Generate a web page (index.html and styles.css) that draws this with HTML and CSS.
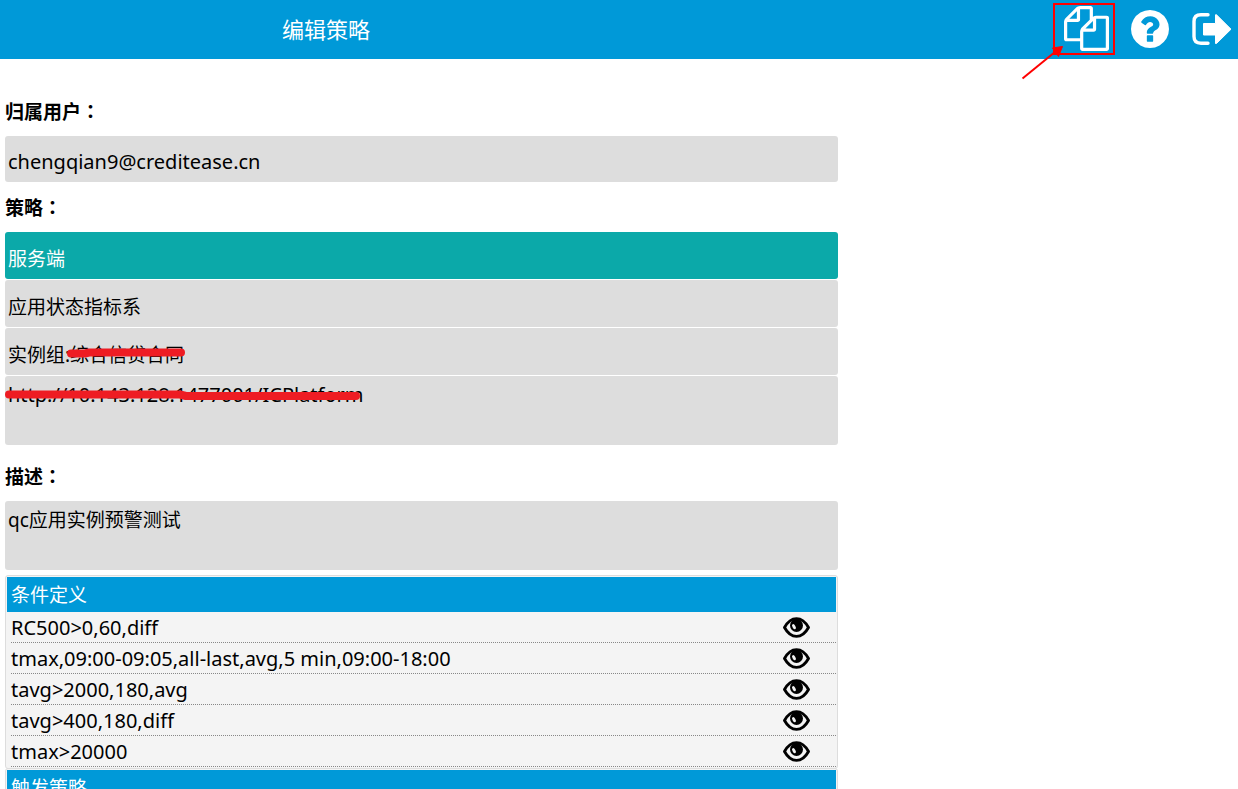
FILE: index.html
```html
<!DOCTYPE html>
<html lang="zh-CN">
<head>
<meta charset="utf-8">
<meta name="viewport" content="width=device-width, initial-scale=1">
<title>编辑策略</title>
<link rel="stylesheet" href="styles.css">
</head>
<body>
<svg class="sprite" aria-hidden="true">
  <symbol id="eye" viewBox="0 0 27 21">
    <path d="M1.500 10.500C4.500 5 8.500 1.600 13.500 1.600S22.500 5 25.500 10.500C22.500 16 18.500 19.400 13.500 19.400S4.500 16 1.500 10.500Z" fill="none" stroke="#000" stroke-width="2.900" stroke-linejoin="round"/>
    <circle cx="13.500" cy="8.500" r="6.500"/>
    <ellipse cx="11" cy="9.700" rx="1.500" ry="2.800" transform="rotate(-30 11 9.700)" fill="#f4f4f4"/>
  </symbol>
</svg>
<header class="topbar">
  <h1 class="title">编辑策略</h1>
  <nav class="actions">
    <button class="action copy" type="button" aria-label="复制">
      <svg class="copy-icon" viewBox="0 0 1792 1792"><path fill="currentColor" d="M1696 384q40 0 68 28t28 68v1216q0 40-28 68t-68 28h-960q-40 0-68-28t-28-68v-288h-544q-40 0-68-28t-28-68v-672q0-40 20-88t48-76l408-408q28-28 76-48t88-20h416q40 0 68 28t28 68v328q68-40 128-40h416zm-544 213l-299 299h299v-299zm-640-384l-299 299h299v-299zm196 647l316-316v-416h-384v416q0 40-28 68t-68 28h-416v640h512v-256q0-40 20-88t48-76zm956 804v-1152h-384v416q0 40-28 68t-68 28h-416v640h896z"/></svg>
      <svg class="marker" viewBox="0 0 96 80" aria-hidden="true">
        <rect x="33" y="4" width="60" height="50" fill="none" stroke="#f00" stroke-width="2"/>
        <path d="M1.500 78.500L34 52" stroke="#f00" stroke-width="2" fill="none"/>
        <path d="M41.500 46.500L31.500 48L37.500 56.500Z" fill="#f00" stroke="#f00"/>
      </svg>
    </button>
    <button class="action" type="button" aria-label="帮助">
      <svg class="help-icon" viewBox="128 128 1536 1536"><path fill="currentColor" d="M1024 1376v-192q0-14-9-23t-23-9h-192q-14 0-23 9t-9 23v192q0 14 9 23t23 9h192q14 0 23-9t9-23zm256-672q0-88-55.500-163t-138.500-116-170-41q-243 0-371 213-15 24 8 42l132 100q7 6 19 6 16 0 25-12 53-68 86-92 34-24 86-24 48 0 85.500 26t37.500 59q0 38-20 61t-68 45q-63 28-115.500 86.500t-52.500 125.500v36q0 14 9 23t23 9h192q14 0 23-9t9-23q0-19 21.500-49.500t54.500-49.500q32-18 49-28.500t46-35 44.500-48 28-60.500 12.500-81zm384 192q0 209-103 385.500t-279.500 279.500-385.500 103-385.500-103-279.500-279.500-103-385.500 103-385.500 279.500-279.500 385.500-103 385.500 103 279.500 279.500 103 385.500z"/></svg>
    </button>
    <button class="action" type="button" aria-label="退出">
      <svg class="exit-icon" viewBox="-1 0 41 32"><path d="M16 1.800H9Q2 1.800 2 8.500V23.500Q2 30.200 9 30.200H16" fill="none" stroke="currentColor" stroke-width="3.400" stroke-linecap="round"/><path fill="currentColor" stroke="currentColor" stroke-linejoin="round" d="M11.500 10.500H23.500V1.800H24.500L39 16.200L24.500 30.500H23.500V22H11.500Z"/></svg>
    </button>
  </nav>
</header>
<main class="page">
  <form class="form">
    <label class="label" for="owner">归属用户<span class="colon" lang="zh-TW">：</span></label>
    <input class="field field-owner latin" id="owner" type="text" value="chengqian9@creditease.cn">
    <label class="label" for="side">策略<span class="colon" lang="zh-TW">：</span></label>
    <div class="stack">
      <input class="field field-head" id="side" type="text" value="服务端">
      <input class="field" type="text" aria-label="指标" value="应用状态指标系">
      <div class="masked">
        <input class="field" type="text" aria-label="实例组" value="实例组:综合信贷合同">
        <svg class="stroke" viewBox="0 0 360 47" aria-hidden="true"><path d="M66 25.500H80L84 24.500H176" /></svg>
      </div>
      <div class="masked">
        <textarea class="field area latin" aria-label="实例地址">http://10.143.128.1477001/ICPlatform</textarea>
        <svg class="stroke" viewBox="0 0 360 47" aria-hidden="true"><path d="M4 18.500H175L181 20H351" /></svg>
      </div>
    </div>
    <label class="label label-desc" for="desc">描述<span class="colon" lang="zh-TW">：</span></label>
    <textarea class="field area" id="desc">qc应用实例预警测试</textarea>
  </form>
  <section class="panel">
    <h2 class="panel-title">条件定义</h2>
    <ul class="rows latin">
      <li class="row"><span class="rule">RC500&gt;0,60,diff</span><button class="view" type="button" aria-label="查看"><svg class="eye"><use href="#eye"/></svg></button></li>
      <li class="row"><span class="rule">tmax,09:00-09:05,all-last,avg,5 min,09:00-18:00</span><button class="view" type="button" aria-label="查看"><svg class="eye"><use href="#eye"/></svg></button></li>
      <li class="row"><span class="rule">tavg&gt;2000,180,avg</span><button class="view" type="button" aria-label="查看"><svg class="eye"><use href="#eye"/></svg></button></li>
      <li class="row"><span class="rule">tavg&gt;400,180,diff</span><button class="view" type="button" aria-label="查看"><svg class="eye"><use href="#eye"/></svg></button></li>
      <li class="row"><span class="rule">tmax&gt;20000</span><button class="view" type="button" aria-label="查看"><svg class="eye"><use href="#eye"/></svg></button></li>
    </ul>
  </section>
  <section class="panel">
    <h2 class="panel-title">触发策略</h2>
  </section>
</main>
</body>
</html>
```
FILE: styles.css
```css
* { box-sizing: border-box; }
body {
  margin: 0;
  height: 100vh;
  display: flex;
  flex-direction: column;
  overflow: hidden;
  background: #fff;
  color: #000;
  font: 19px/24px "Noto Sans", "Noto Sans CJK SC", sans-serif;
}
.sprite { position: absolute; width: 0; height: 0; }
button { border: 0; padding: 0; background: none; color: inherit; cursor: pointer; }
svg { display: block; }

.topbar {
  flex: none;
  display: flex;
  align-items: center;
  justify-content: space-between;
  height: 59px;
  padding: 0 6px 2px 282px;
  background: #0099d8;
  color: #fff;
}
.title { margin: 0; font-size: 22px; line-height: 32px; font-weight: 400; }
.actions { display: flex; align-items: center; gap: 22px; }
.action { position: relative; }
.copy-icon { width: 45px; height: 45px; }
.help-icon { width: 38px; height: 38px; }
.exit-icon { width: 41px; height: 32px; }
.marker { position: absolute; left: -43px; top: -6px; width: 96px; height: 80px; pointer-events: none; }

.page { flex: 1; min-height: 0; width: 68%; padding: 40px 4px 0 5px; overflow: hidden; }
.form { display: flex; flex-direction: column; }
.label { height: 25px; font-weight: 700; margin-bottom: 12px; }
.field + .label { margin-top: 13px; }
.label-desc { margin-top: 19px; }
.colon { font-family: "Noto Sans CJK TC", sans-serif; }
.stack { display: flex; flex-direction: column; gap: 1px; }
.masked { position: relative; }
.field {
  display: block;
  width: 100%;
  height: 47px;
  margin: 0;
  padding: 5px 3px 0;
  border: 0;
  border-radius: 3px;
  background: #ddd;
  color: inherit;
  font: inherit;
  outline: 0;
}
.field-owner { height: 46px; }
.field-head { background: #0ba9a9; color: #fff; }
.area { height: 69px; padding: 7px 3px; resize: none; overflow: hidden; }
.latin { font-size: 20px; }
.stroke { position: absolute; left: 0; top: 0; width: 360px; height: 47px; pointer-events: none; }
.stroke path { fill: none; stroke: #ee1c23; stroke-width: 8; stroke-linecap: round; stroke-linejoin: round; }

.panel { border: 1px solid #ddd; border-radius: 3px; padding: 1px; background: #f4f4f4; }
.form + .panel { margin-top: 5px; }
.panel + .panel { margin-top: -1px; }
.panel-title { margin: 0; padding: 6px 4px 5px; background: #0099d8; color: #fff; font-size: 19px; line-height: 24px; font-weight: 400; }
.rows { margin: 0; padding: 0 0 0 4px; list-style: none; }
.row {
  display: flex;
  align-items: center;
  justify-content: space-between;
  height: 31px;
  padding-right: 26px;
  border-bottom: 1px dotted #888;
}
.rule { padding-top: 2px; }
.eye { width: 27px; height: 21px; }
```
